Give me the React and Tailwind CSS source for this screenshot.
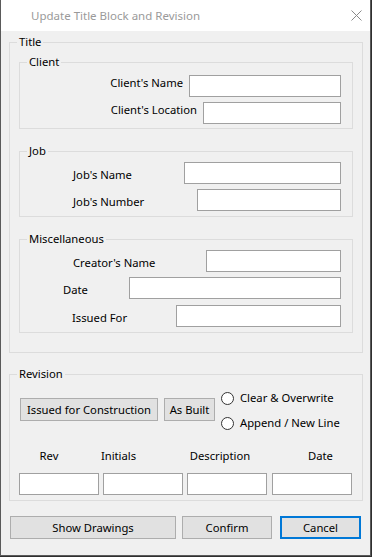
import React from 'react';

const GroupBox = ({ title, className = '', innerClassName = '', children }) => (
  <fieldset className={`border border-[#dcdcdc] ${className}`}>
    <legend className="ml-[7px] px-[2px] leading-[16px]">{title}</legend>
    <div className={innerClassName}>{children}</div>
  </fieldset>
);

const TextBox = ({ width }) => (
  <input
    type="text"
    className="h-[22px] shrink-0 border border-[#a0a0a0] bg-white outline-none"
    style={{ width }}
  />
);

// left-aligned label, box pushed to the right edge of the group
const FieldRow = ({ label, labelLeft, boxWidth, className = '' }) => (
  <div className={`flex h-[22px] items-center ${className}`}>
    <span className="whitespace-nowrap pt-[4px]" style={{ paddingLeft: labelLeft }}>
      {label}
    </span>
    <div className="ml-auto">
      <TextBox width={boxWidth} />
    </div>
  </div>
);

const Button = ({ children, className = '' }) => (
  <button
    className={`flex h-[23px] items-center justify-center border border-[#adadad] bg-[#e1e1e1] leading-none ${className}`}
  >
    {children}
  </button>
);

const Radio = ({ label }) => (
  <label className="flex h-[20px] items-center whitespace-nowrap">
    <span className="h-[13px] w-[13px] shrink-0 rounded-full border border-[#333] bg-white" />
    <span className="ml-[6px]">{label}</span>
  </label>
);

export default function App() {
  return (
    <div className="h-[557px] w-[372px] bg-[#2f2f2f] font-['Noto_Sans',sans-serif] text-[11.25px] text-black">
      <div className="flex h-[556px] w-[371px] flex-col border-x border-b border-[#5a5a5a] bg-[#f0f0f0]">
        {/* title bar */}
        <div className="flex h-[31px] shrink-0 items-center bg-white pl-[30px] pr-[8px]">
          <span className="text-[11.5px] text-[#9a9a9a]">Update Title Block and Revision</span>
          <svg className="ml-auto" width="11" height="11" viewBox="0 0 11 11">
            <path d="M0.5 0.5 L10.5 10.5 M10.5 0.5 L0.5 10.5" stroke="#8a8a8a" strokeWidth="1" />
          </svg>
        </div>

        <div className="flex flex-1 flex-col pl-[8px] pr-[7px] pt-[3px]">
          <GroupBox title="Title" innerClassName="flex flex-col gap-[14px] px-[9px] pb-[19px] pt-[4px]">
            <GroupBox title="Client" innerClassName="flex flex-col gap-[5px] pb-[4px] pr-[11px] pt-[5px]">
              <div className="flex h-[22px] items-center justify-end gap-[6px]">
                <span className="pb-[5px]">Client's Name</span>
                <TextBox width={152} />
              </div>
              <div className="flex h-[22px] items-center justify-end gap-[6px]">
                <span className="pb-[5px]">Client's Location</span>
                <TextBox width={138} />
              </div>
            </GroupBox>

            <GroupBox title="Job" innerClassName="flex flex-col gap-[5px] pb-[5px] pr-[11px] pt-[3px]">
              <FieldRow label="Job's Name" labelLeft={53} boxWidth={157} />
              <FieldRow label="Job's Number" labelLeft={53} boxWidth={144} />
            </GroupBox>

            <GroupBox title="Miscellaneous" innerClassName="flex flex-col pb-[5px] pr-[11px] pt-[3px]">
              <FieldRow label="Creator's Name" labelLeft={53} boxWidth={135} />
              <FieldRow label="Date" labelLeft={43} boxWidth={212} className="mt-[5px]" />
              <FieldRow label="Issued For" labelLeft={52} boxWidth={165} className="mt-[6px]" />
            </GroupBox>
          </GroupBox>

          <GroupBox title="Revision" className="mt-[13px]" innerClassName="pb-[5px] pl-[9px] pt-[6px]">
            <div className="flex items-start pl-[1px]">
              <Button className="mt-[10px] w-[138px]">Issued for Construction</Button>
              <Button className="ml-[6px] mt-[10px] w-[51px]">As Built</Button>
              <div className="ml-[6px] flex flex-col gap-[5px]">
                <Radio label="Clear & Overwrite" />
                <Radio label="Append / New Line" />
              </div>
            </div>

            <div className="mt-[15px] flex h-[16px] items-center leading-[16px]">
              <span className="w-[60px] text-center">Rev</span>
              <span className="w-[79px] text-center">Initials</span>
              <span className="w-[124px] text-center">Description</span>
              <span className="w-[77px] text-center">Date</span>
            </div>

            <div className="mt-[9px] flex">
              <TextBox width={80} />
              <div className="ml-[4px]">
                <TextBox width={80} />
              </div>
              <div className="ml-[4px]">
                <TextBox width={80} />
              </div>
              <div className="ml-[5px]">
                <TextBox width={80} />
              </div>
            </div>
          </GroupBox>

          <div className="mt-[15px] flex pl-[1px]">
            <Button className="w-[166px]">Show Drawings</Button>
            <Button className="ml-[6px] w-[90px]">Confirm</Button>
            <button className="ml-[8px] flex h-[23px] w-[81px] items-center justify-center border-2 border-[#0078d7] bg-[#e1e1e1] leading-none">
              Cancel
            </button>
          </div>
        </div>
      </div>
    </div>
  );
}
